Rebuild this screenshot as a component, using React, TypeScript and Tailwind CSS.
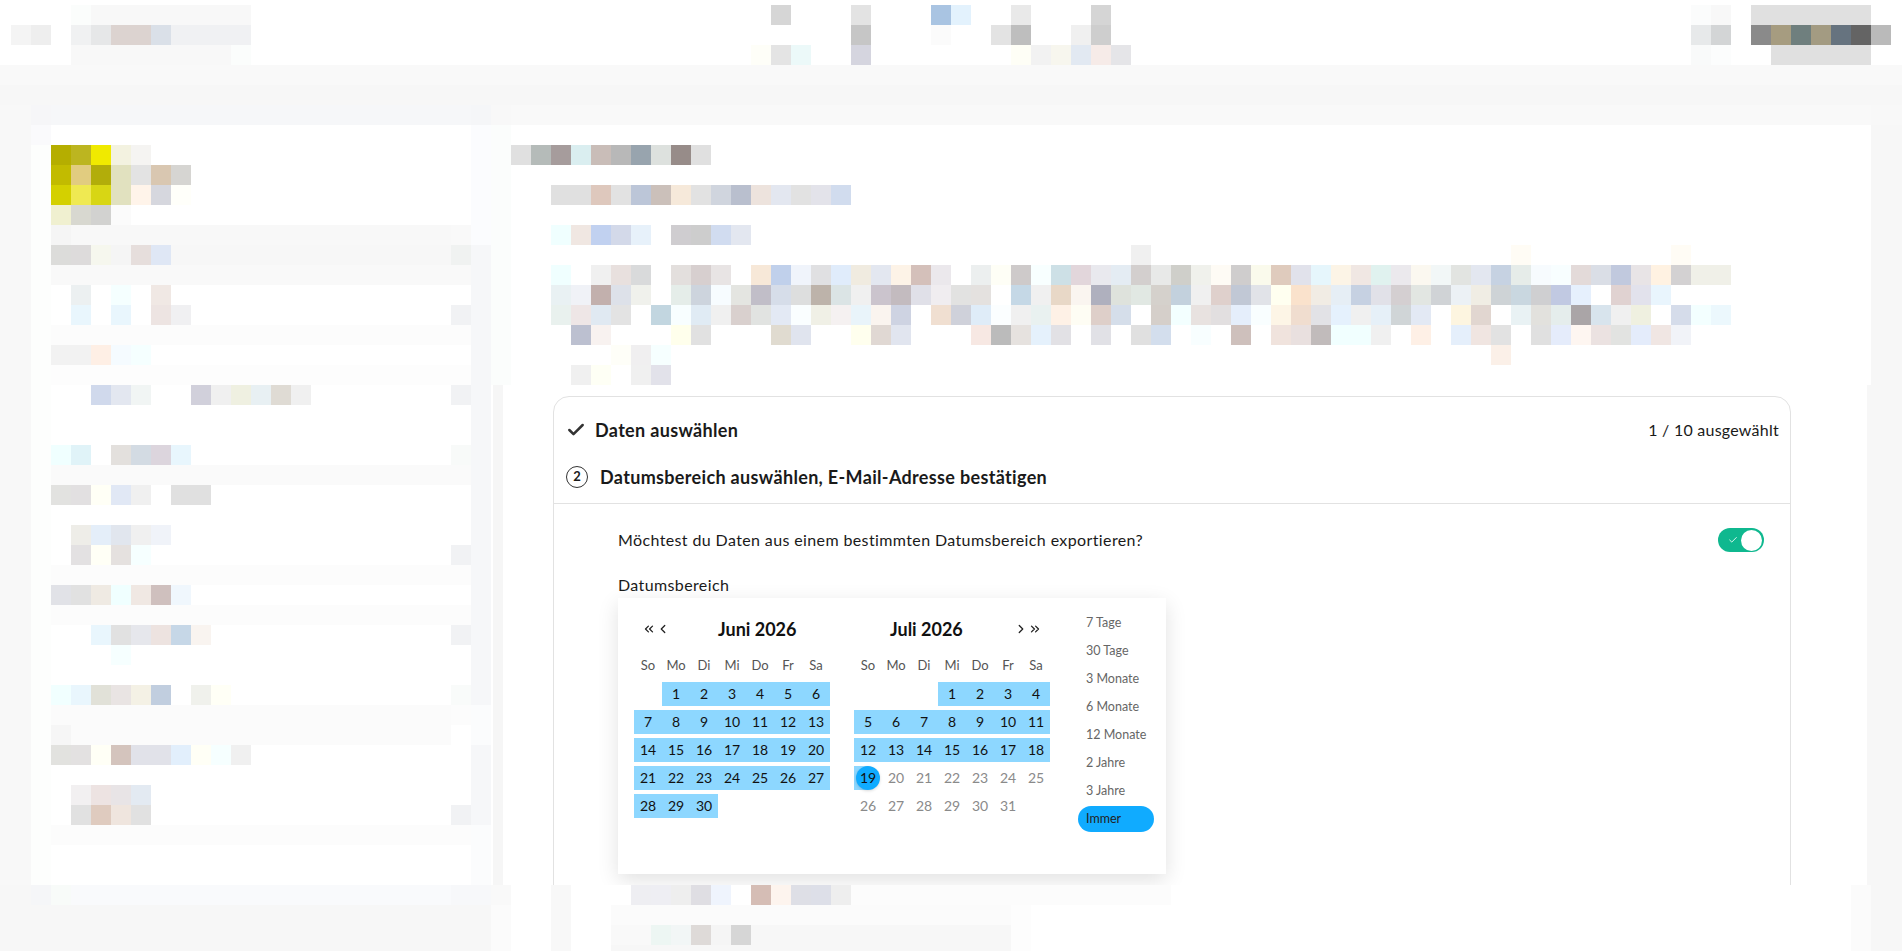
import React from "react";
import { Check, ChevronLeft, ChevronRight, ChevronsLeft, ChevronsRight } from "lucide-react";

function parse(spec: string, origin: number): string[] {
  const out: string[] = [];
  let x = origin;
  for (const t of spec.split(" ").filter(Boolean)) {
    if (t[0] === "@") {
      const to = Number(t.slice(1));
      while (x < to) {
        out.push("");
        x += 20;
      }
      continue;
    }
    const [c, n] = t.split("*");
    const count = n ? Number(n) : 1;
    for (let i = 0; i < count; i++) {
      out.push(c === "." ? "" : "#" + c);
      x += 20;
    }
  }
  return out;
}

function Mosaic({ rows, origin }: { rows: string[]; origin: number }) {
  return (
    <>
      {rows.map((spec, i) => (
        <div key={i} className="flex h-5 shrink-0">
          {parse(spec, origin).map((c, j) => (
            <span key={j} className="block h-5 w-5 shrink-0" style={c ? { backgroundColor: c } : undefined} />
          ))}
        </div>
      ))}
    </>
  );
}

const headerRows = [
  "@71 fbfdfc f8f8f8*8 @771 d6d6d6 @851 e3e3e3 @931 a9c4e2 e3f2fd @1011 e9e9e9 @1091 d5d5d5 @1691 fbfcfc f8f8f8 @1751 e0e0e0*6",
  "f4f4f4 eeeeee @71 f0f1f2 e6e7e8 dcd3d0 dcd3d0 dae0e8 f0f1f3*4 @851 c6c6c6 @931 fbfbfb @991 e3e3e3 bebebe @1071 f0f0f0 cecece @1691 e7e9ea d3d5d6 @1751 8a8a8a a69c80 6f7f7e a39b82 66737f 646464 bababa",
  "@71 f8f8f8*8 fbfdfc @751 fefef8 e4e4e4 ecf9f9 @851 d5d5df @1011 fefef6 f2f2f2 f7f6ee e2e9f2 f6ebe8 e5e5e8 @1691 f9fafa fcfdfd @1771 e0e0e0*5",
];

const sideRows = [
  "",
  "b5ae00 bcb520 f0ea00 f3f2e0 f5f4f2",
  "c2bb00 e1cc80 b2ad0a e1e1bf e3e3e3 d9c7b1 d6d5d2",
  "d4d000 efe952 d8d614 e1e1bf fff4ea d6d7de fffffa",
  "f0f0d0 d8d8d0 d2d2d0 fbfbfb",
  "f5f5f5 f8f8f8*19 f9f9f9",
  "dcdcda dddbdb f6f7ee f5f5f5 e6dedc dfe7f5 f7f7f7*14 f0f2f1",
  "f9f9f9*21",
  ". ecf0f1 . f5ffff . f0e8e4",
  ". e9f6fd . e9f6fd . ede4e2 f0f0f2 .*13 f1f2f4",
  "fcfcfc*21",
  "f2f2f2 f2f2f2 feefe5 f5fbff f5ffff",
  "fdfdfd*21",
  ". . d0d9ec e3e7f0 f1f5f4 . . d1d0db f0f0f0 eff0e1 e8f0f3 dfdbd4 f0f0f0 .*7 f1f2f4",
  "",
  "",
  "f0ffff e0f3f8 . e3e0dd d3dbe3 dcd5dd e8f6fd .*13 f8faf9",
  "fafafa*21",
  "e2e2e0 e2e0e1 fffff6 e1e8f5 f0f0f0 . e0e0e0 e0e0e0",
  "",
  ". eeede8 e4eef9 e1e6ee f0f0f0 f0f3f9",
  ". e3e1e2 fffff6 e5e1df f6ffff .*15 f1f2f4",
  "fcfcfc*21",
  "e1e2e7 e1e1e1 efeae3 f0ffff f0e8e3 cfc0be f0f7fd",
  "fcfcfc*21",
  ". . e9f6fd e1e1e1 e6e7ec ede3e0 c6d7e7 f9f4f0 .*12 f1f2f4",
  ". . . f6ffff",
  "",
  "f1ffff e9f6fd e1e1d8 e9e4e3 f4f1e5 c1cedf . f0f1ec fffff6 .*11 f9fbfa",
  "fbfbfb*20 fcfcfc",
  "f6f6f6 fbfbfb*19 .",
  "e2e2df e3e1e1 fffff6 d4c4bd e1e2e9 e1e2e9 e2effc fffff6 f6ffff f0f0f0",
  "",
  ". f2f0f1 ede3e2 e8e4e6 e3eaf2",
  ". e1e1e1 dfcbbf efe5de e1e1e1 .*15 f1f2f4",
  "fcfcfc*21",
  "",
  "",
];

const mainRows = [
  "",
  "e0e0e0 b5bbb9 a69c9c daeef0 c9bdb8 b8b8b8 98a4ae dde1de 978c89 e0e0e0",
  "",
  "@551 e0e0e0 e0e0e0 dec8bd e2e2e2 bcc6d8 cbc0ba f6e9da e2e2e2 d0d5de b9bfce ede3dd e3e7f0 e2e2e2 e3e3ea d1dcee",
  "",
  "@551 f0ffff f0e7e2 c1d1f0 d3d9e9 e7f1fa @671 cfcdd0 cdcdcd d1dcf0 e3e7f0",
  "@1131 f0f0f0 @1511 fffcf5 @1671 fffcf5",
  "@551 f0ffff . f0f0f0 e8e0de d9dadb . e3dfdd d7cfcf e8e4e4 . f7e8d8 c0d0eb f0f4fb e0e0e2 e0ecfb f0ebe0 e3e7f0 fdf3e7 d4c0ba ebe8ec . ecefef fefef6 cecaca f8ffff cde0e6 e2d6db e9e9ee e4ecf3 d3cfce e8e9e8 cfcfca f0f1ec fefbf5 cfcdcd fafaec dfcbbd e1e2eb e6f6fc fcf4e6 f0e7e3 e0f2ef ebe9ed fbf8f0 f2f7f7 e2e4e1 e3e7f0 c6d2e2 e6ece9 f7fbfe f8feff e3dad9 dadee6 c1c9de e8e4e6 fff2e2 d3d1d2 f0f0e8 f0f0e8",
  "@551 e9f1f3 f0f2f7 c2b0ad dde1e9 f0f1ec . e5ede9 cdd4dd f7fcff e4e5e1 c1bec8 d6dde9 dddede bdb3aa dbe4e5 f0f0f0 cbc4cd c3bbbf e0e0e8 f0edf0 e2e2e1 e4e1df . c5d8e6 f0f0f0 e8d8c7 faf5f0 afb0be dee2dc e1e8e3 d5d1cc c3d1dd f0f0f0 dfd0cc c1c8d5 e1e3e8 fffff0 fae2cc f1ece4 e6eef5 c6d1e2 e1e1e8 d4cfd1 e2e6e2 d0d3d6 ecf1f5 f0ede4 ced3d6 c9d7e0 cfcfd1 c1c9e2 e6f0fd . e0d2d1 e2e2ec e9f5fd",
  "@551 e9f1ee eee6e6 e0e9f2 e3e3e3 . c2d6e0 f8feff e0ebf4 f0f0f0 d9d0ce e1e3e1 e3e9f4 fafeff f0f0e6 f5f1f1 e9f4fa faf4ef ced3e2 . f0dfd1 cfd1da dfecf8 fbfeff f0f0f0 e9f1f0 fef1e6 fefdf4 decfc9 d5deea . d5cfca f3ffff e8e2e0 e2dfe0 e5eefb f9feff fdf5e6 f0ddcf e2e2e6 e5f1fd f0f0f0 e6f0f8 d0d5d7 e3e9f4 . fdf5e0 e1d6d0 . e9f2f4 e2e1dd e5edec aaa5a7 d8e4ed f0f0f0 eff0e0 . d5dcea f3ffff ecf8fd",
  "@571 bcc0d0 f8f2f0 @671 ffffec e1e1e1 @771 e0dbd0 e0e4ee @851 ffffee e0d8d3 e1e5ef @971 f7e8e3 bbbbbb e6e2df e5f1fc e2e1e5 . e1e1e6 . e0e0e0 d3deed . f8feff . cec0bc . f0e3dd e9e0df c1bbbb f1ffff f1ffff f0f0f0 . fef0e6 . e5effb f0e5e1 e2e2e2 . e0e0e0 e5ecfb fef6f1 ebe2e1 e2e3e1 e4ecfb f0e6e3 f1f3f8",
  "@611 fefef8 f0eff0 f6ffff @1491 fbf0e8",
  "@571 f0f0f0 fefff5 . f0f0f0 e2e2ea",
];

const footMain = [
  "@551 f8f8f8 @631 eeeef2 eeeef3 eeeeee dfdee3 eff4fd . d5bdb5 fdf4ee dedfe6 dddfe8 eeeeee fcfcfc*16 @1851 fbfbfb",
  "@551 f8f8f8 @611 fbfbfb*20 fdfdfd @1851 fbfbfb",
  "@551 f8f8f8 @611 f9f9f9 f9f9f9 edf6f3 f2f6f6 dedad8 f5f5f5 d6d6d6 f7f7f7*13 fdfdfd @1851 fbfbfb",
  "@551 f8f8f8 @611 f7f7f7*20 fdfdfd @1851 fbfbfb",
];

const font = "font-['Lato','Noto_Sans',sans-serif]";

const weekdays = ["So", "Mo", "Di", "Mi", "Do", "Fr", "Sa"];

function Weekdays() {
  return (
    <div className="mt-[13px] grid h-6 grid-cols-7 items-center text-center text-[13px] text-[#555555]">
      {weekdays.map((d) => (
        <span key={d}>{d}</span>
      ))}
    </div>
  );
}

function Days({ blanks, last, inRangeTo, selected }: { blanks: number; last: number; inRangeTo: number; selected?: number }) {
  const cells: React.ReactNode[] = [];
  for (let i = 0; i < blanks; i++) cells.push(<span key={"b" + i} className="h-6" />);
  for (let d = 1; d <= last; d++) {
    if (d === selected) {
      cells.push(
        <span key={d} className="flex h-6 items-center justify-center bg-[linear-gradient(to_right,#8dd7ff_50%,transparent_50%)] text-[#111111]">
          <span className="flex h-6 w-6 items-center justify-center rounded-full bg-[#10abff] pb-px shadow-[0_1px_3px_rgba(0,0,0,0.15)]">{d}</span>
        </span>
      );
    } else if (d <= inRangeTo) {
      cells.push(
        <span key={d} className="flex h-6 items-center justify-center bg-[#8dd7ff] pb-px text-[#111111]">
          {d}
        </span>
      );
    } else {
      cells.push(
        <span key={d} className="flex h-6 items-center justify-center pb-px text-[#8a8a8a]">
          {d}
        </span>
      );
    }
  }
  return <div className="mt-1 grid grid-cols-7 gap-y-1 text-[14px]">{cells}</div>;
}

const presets = ["7 Tage", "30 Tage", "3 Monate", "6 Monate", "12 Monate", "2 Jahre", "3 Jahre"];

function DatePopup() {
  return (
    <div className="mt-[3px] flex h-[276px] w-[548px] bg-white pl-4 shadow-[0_6px_20px_rgba(0,0,0,0.12)]">
      <div className="w-[196px] pt-[19px]">
        <div className="flex h-6 items-center">
          <div className="ml-[8px] flex w-[28px] items-center text-[#222222]">
            <ChevronsLeft size={14} strokeWidth={2.2} />
            <ChevronLeft size={14} strokeWidth={2.2} />
          </div>
          <span className="ml-[48px] text-[18px] font-bold leading-6 text-[#111111]">Juni 2026</span>
        </div>
        <Weekdays />
        <Days blanks={1} last={30} inRangeTo={30} />
      </div>
      <div className="ml-6 w-[196px] pt-[19px]">
        <div className="flex h-6 items-center">
          <span className="ml-[36px] text-[18px] font-bold leading-6 text-[#111111]">Juli 2026</span>
          <div className="ml-auto mr-[8px] flex w-[28px] items-center text-[#222222]">
            <ChevronRight size={14} strokeWidth={2.2} />
            <ChevronsRight size={14} strokeWidth={2.2} />
          </div>
        </div>
        <Weekdays />
        <Days blanks={3} last={31} inRangeTo={18} selected={19} />
      </div>
      <div className="ml-7 flex w-[76px] flex-col gap-[2px] pt-3 text-[12.5px]">
        {presets.map((p) => (
          <div key={p} className="flex h-[26px] items-center pl-2 text-[#666666]">
            {p}
          </div>
        ))}
        <div className="flex h-[26px] items-center rounded-[13px] bg-[#10abff] pl-2 text-[#222222]">Immer</div>
      </div>
    </div>
  );
}

function ExportCard() {
  return (
    <div className="h-[600px] w-[1238px] rounded-t-2xl border border-[#e2e2e2] text-[#1a1a1a]">
      <div className="flex h-[66px] items-center pl-3 pr-[11px]">
        <Check size={20} strokeWidth={3} className="text-[#333333]" />
        <span className="ml-[9px] text-[18px] font-bold tracking-[0.33px]">Daten auswählen</span>
        <span className="ml-auto text-[16px] tracking-[0.25px]">1 / 10 ausgewählt</span>
      </div>
      <div className="flex h-[41px] items-start border-b border-[#e2e2e2] pl-3 pr-3">
        <div className="flex h-[28px] items-center">
          <span className="flex h-[22px] w-[22px] items-center justify-center rounded-full border border-[#333333] text-[13px] font-bold">2</span>
          <span className="ml-[12px] text-[18px] font-bold tracking-[0.33px]">Datumsbereich auswählen, E-Mail-Adresse bestätigen</span>
        </div>
      </div>
      <div className="pl-16 pr-[26px] pt-6">
        <div className="flex h-6 items-center justify-between">
          <span className="text-[16px] tracking-[0.38px]">Möchtest du Daten aus einem bestimmten Datumsbereich exportieren?</span>
          <span className="flex h-6 w-[46px] items-center justify-between rounded-full bg-[#0fb88f] pl-[10px] pr-[2px]">
            <Check size={10} strokeWidth={2} className="text-white" />
            <span className="h-[21px] w-[21px] rounded-full bg-white" />
          </span>
        </div>
        <div className="mt-[23px] h-5 text-[16px] leading-5 tracking-[0.38px]">Datumsbereich</div>
        <DatePopup />
      </div>
    </div>
  );
}

export default function App() {
  return (
    <div className={"flex h-[951px] w-[1902px] flex-col overflow-hidden bg-[#f7f7f7] " + font}>
      <header className="h-[65px] shrink-0 bg-white pl-[11px] pt-[5px]">
        <Mosaic rows={headerRows} origin={11} />
      </header>
      <div className="h-5 shrink-0 bg-[#f9f9f9]" />
      <div className="h-5 shrink-0 bg-[#f7f7f7]" />
      <div className="shrink-0 bg-[#f8f8f8] pl-[31px]">
        <Mosaic rows={["f6f6f8 f6f7f9*21 f5f6f8 f8f8f8 f9f9f9*68"]} origin={31} />
      </div>

      <div className="flex h-[760px] shrink-0">
        <div className="w-[31px] shrink-0 bg-[#f8f8f8]" />
        <aside className="flex w-[480px] shrink-0 bg-white">
          <div className="flex w-5 flex-col bg-[#fdfefd]">
            <div className="h-5 bg-[#fafafc]" />
          </div>
          <div className="w-[420px]">
            <Mosaic rows={sideRows} origin={51} />
          </div>
          <div className="flex w-5 flex-col">
            <div className="h-[120px] bg-[#fbfcfe]" />
            <div className="h-[460px] bg-[#f6f7f9]" />
            <div className="h-10 bg-[#fbfcfd]" />
            <div className="h-20 bg-[#f6f7f9]" />
            <div className="h-[60px] bg-[#fbfcfd]" />
          </div>
          <div className="flex w-5 flex-col">
            <div className="h-[260px] bg-[#fbfdfc]" />
            <div className="flex h-[500px]">
              <div className="w-[2px]" />
              <div className="w-[10px] bg-[#f6f6f6]" />
            </div>
          </div>
        </aside>
        <main className="w-[1360px] shrink-0">
          <div className="h-[260px] bg-white">
            <Mosaic rows={mainRows} origin={511} />
          </div>
          <div className="h-[500px] w-[1356px] overflow-hidden bg-white pl-[42px] pt-[11px]">
            <ExportCard />
          </div>
        </main>
      </div>

      <div className="flex min-h-0 flex-1">
        <div className="w-[491px] shrink-0">
          <div className="pl-[31px]">
            <Mosaic rows={["f5f6f8 f8fbf9 f9fafc*19 f7f8fa f7f8fa"]} origin={31} />
          </div>
        </div>
        <div className="flex w-5 shrink-0 flex-col bg-[#fbfbfb]">
          <div className="h-5 bg-[#f9f9f9]" />
        </div>
        <div className="w-[1360px] shrink-0 overflow-hidden bg-white">
          <Mosaic rows={footMain} origin={511} />
        </div>
      </div>
    </div>
  );
}
